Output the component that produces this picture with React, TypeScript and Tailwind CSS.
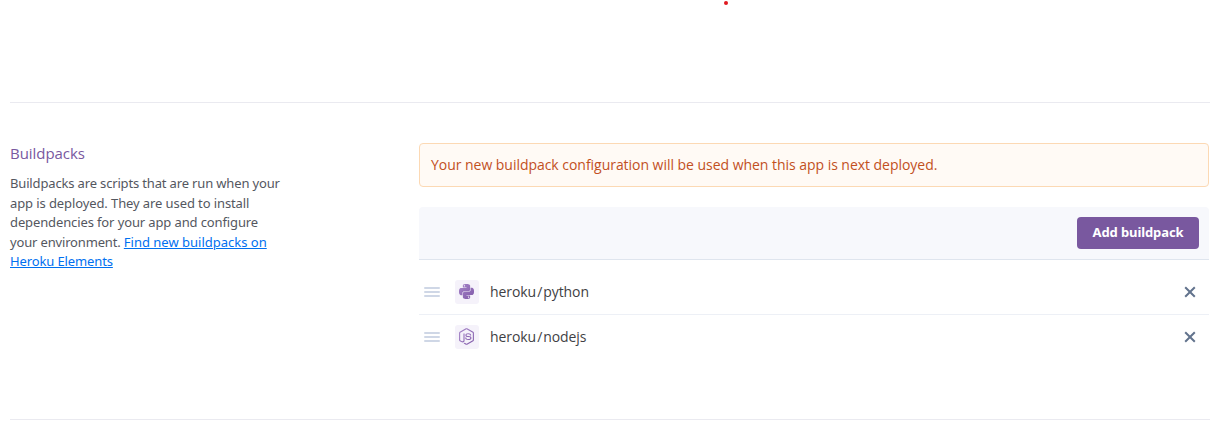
import { FaNodeJs } from "react-icons/fa";
import { SiPython } from "react-icons/si";
import type { ReactNode } from "react";

function Grip() {
  return (
    <svg className="ml-[5px] h-3 w-4 shrink-0" viewBox="0 0 16 12" stroke="#cfd7e6" strokeWidth="2" strokeLinecap="round">
      <path d="M1 2h14M1 6h14M1 10h14" />
    </svg>
  );
}

function Row({ name, icon }: { name: string; icon: ReactNode }) {
  const [owner, pack] = name.split("/");
  return (
    <li className="flex h-[45px] items-center border-b border-[#edf0f6] last:h-11 last:border-b-0">
      <Grip />
      <span className="ml-[15px] flex size-6 shrink-0 items-center justify-center rounded-[3px] bg-[#f5f2fa] pr-px pb-px">{icon}</span>
      <span className="ml-[11px] grow pb-0.5 font-['Open_Sans','Noto_Sans',sans-serif] text-[14px] tracking-[-0.07px] text-[#3f3f44]">
        {owner}
        <span className="mx-[1px]">/</span>
        {pack}
      </span>
      <button aria-label={`Remove ${name}`} className="mr-[13px]">
        <svg className="size-3" viewBox="0 0 12 12" stroke="#62738d" strokeWidth="2">
          <path d="M1.2 1.2l9.6 9.6M10.8 1.2l-9.6 9.6" />
        </svg>
      </button>
    </li>
  );
}

export default function App() {
  return (
    <div className="h-[434px] overflow-hidden bg-white px-[10px] font-['Noto_Sans','Open_Sans',sans-serif]">
      <svg width="0" height="0" className="absolute" aria-hidden="true">
        <linearGradient id="pack" x1="0" y1="0" x2="1" y2="1">
          <stop offset="0" stopColor="#a584c8" />
          <stop offset="1" stopColor="#8059a8" />
        </linearGradient>
      </svg>
      <div className="flex h-[102px] justify-center">
        <span className="ml-[222px] mt-px size-1 rounded-full bg-[#e0191f]" />
      </div>
      <section className="flex h-[318px] w-[1200px] border-y border-[#eaeaf0] pt-10">
        <div className="w-[409px] shrink-0">
          <h2 className="-mt-px font-['Open_Sans','Noto_Sans',sans-serif] text-[15px] leading-[22px] tracking-[-0.05px] text-[#79589f]">Buildpacks</h2>
          <p className="mt-[10px] whitespace-nowrap text-[13px] leading-[19.5px]">
            <span className="text-[#54575f]">
              <span className="tracking-[-0.155px]">Buildpacks are scripts that are run when your</span>
              <br />
              <span className="tracking-[-0.1px]">app is deployed. They are used to install</span>
              <br />
              <span className="tracking-[-0.12px]">dependencies for your app and configure</span>
              <br />
              <span className="tracking-[-0.16px]">your environment. </span>
            </span>
            <a className="text-[#0070f0] underline" href="#elements">
              Find new buildpacks on
              <br />
              <span className="tracking-[-0.12px]">Heroku Elements</span>
            </a>
          </p>
        </div>
        <div className="w-[790px]">
          <div className="flex h-11 items-center rounded-[4px] border border-[#fcd9b4] bg-[#fffaf5] px-[11px] pb-0.5 font-['Open_Sans','Noto_Sans',sans-serif] text-[14px] tracking-[-0.035px] text-[#c2501e]">
            Your new buildpack configuration will be used when this app is next deployed.
          </div>
          <div className="mt-5 flex h-[53px] items-center justify-end rounded-t-[4px] border-b border-[#dfe5ee] bg-[#f7f8fc] pr-[10px]">
            <button className="h-8 w-[122px] rounded-[4px] bg-[#79589f] text-[13px] font-bold tracking-[-0.1px] text-white">Add buildpack</button>
          </div>
          <ul className="pt-[10px]">
            <Row name="heroku/python" icon={<SiPython className="size-[15px]" fill="url(#pack)" />} />
            <Row name="heroku/nodejs" icon={<FaNodeJs className="size-[17px]" fill="url(#pack)" />} />
          </ul>
        </div>
      </section>
    </div>
  );
}
